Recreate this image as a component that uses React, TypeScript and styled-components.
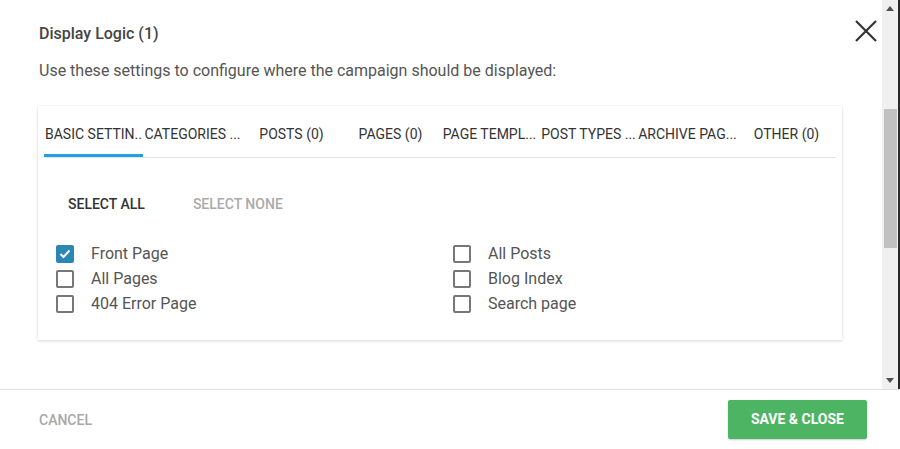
import React from "react";
import styled, { createGlobalStyle } from "styled-components";

const Global = createGlobalStyle`
  html, body { margin: 0; padding: 0; background: #fff; }
  body { font-family: Roboto, "Noto Sans", Arial, sans-serif; }
  * { box-sizing: border-box; }
`;

const Page = styled.div`
  width: 900px;
  height: 449px;
  display: flex;
  flex-direction: column;
  overflow: hidden;
  background: #fff;
`;

const Body = styled.div`
  height: 389px;
  display: flex;
`;

const Main = styled.div`
  flex: 1;
  position: relative;
  padding: 24px 0 0 39px;
  display: flex;
  flex-direction: column;
`;

const Title = styled.div`
  font-size: 16px;
  line-height: 20px;
  font-weight: 500;
  color: #444;
`;

const Subtitle = styled.div`
  margin-top: 17px;
  font-size: 16px;
  line-height: 20px;
  color: #555;
`;

const CloseButton = styled.button`
  position: absolute;
  top: 19px;
  right: 4px;
  width: 24px;
  height: 24px;
  padding: 0;
  border: none;
  background: none;
  display: flex;
  align-items: center;
  justify-content: center;
`;

const Card = styled.div`
  margin: 25px 0 0 -1px;
  width: 804px;
  background: #fff;
  box-shadow: 0 1px 3px rgba(0, 0, 0, 0.16), 0 0 1px rgba(0, 0, 0, 0.06);
  padding-bottom: 24px;
`;

const TabList = styled.div`
  margin: 0 6px;
  display: grid;
  grid-template-columns: repeat(8, 99px);
  border-bottom: 1px solid #e4e4e4;
`;

const Tab = styled.div<{ $active?: boolean }>`
  position: relative;
  height: 51px;
  padding: 18px 0 0;
  font-size: 14px;
  line-height: 20px;
  color: #333;
  text-align: center;
  white-space: nowrap;
  overflow: hidden;
  &::after {
    content: "";
    position: absolute;
    left: 0;
    right: 0;
    bottom: 0;
    height: 3px;
    background: ${(p) => (p.$active ? "#1da1e2" : "transparent")};
  }
`;

const ButtonRow = styled.div`
  margin-top: 28px;
  padding-left: 18px;
  display: flex;
  gap: 24px;
`;

const FlatButton = styled.button<{ $muted?: boolean }>`
  height: 36px;
  padding: 0 12px;
  border: none;
  background: none;
  font-family: Roboto, Arial, sans-serif;
  font-size: 14px;
  font-weight: 500;
  color: ${(p) => (p.$muted ? "#aaa" : "#333")};
`;

const Grid = styled.div`
  margin-top: 19px;
  padding-left: 18px;
  display: grid;
  grid-template-columns: 397px 1fr;
  grid-auto-flow: column;
  grid-template-rows: repeat(3, 25px);
`;

const Row = styled.label`
  display: flex;
  align-items: center;
  gap: 17px;
  font-size: 16px;
  color: #555;
`;

const Box = styled.span<{ $checked?: boolean }>`
  width: 18px;
  height: 18px;
  border-radius: 2px;
  border: 2px solid ${(p) => (p.$checked ? "#2c86b4" : "#777")};
  background: ${(p) => (p.$checked ? "#2c86b4" : "#fff")};
  display: flex;
  align-items: center;
  justify-content: center;
  margin-top: 1px;
`;

const Scrollbar = styled.div`
  width: 18px;
  background: #f0f0f0;
  border-right: 2px solid #2a2a2a;
  display: flex;
  flex-direction: column;
`;

const Arrow = styled.div`
  height: 17px;
  display: flex;
  align-items: center;
  justify-content: center;
`;

const Track = styled.div`
  flex: 1;
  padding-top: 92px;
`;

const Thumb = styled.div`
  margin-left: 2px;
  width: 13px;
  height: 139px;
  background: #c1c1c1;
`;

const Footer = styled.div`
  flex: 1;
  border-top: 1px solid #e0e0e0;
  display: flex;
  align-items: center;
  justify-content: space-between;
  padding: 0 33px 0 39px;
`;

const Cancel = styled.button`
  padding: 0;
  border: none;
  background: none;
  font-family: Roboto, Arial, sans-serif;
  font-size: 14px;
  font-weight: 500;
  color: #a8a8a8;
`;

const Save = styled.button`
  height: 39px;
  padding: 0 23px;
  border: none;
  border-radius: 2px;
  background: #4cb462;
  color: #fff;
  font-family: Roboto, Arial, sans-serif;
  font-size: 14px;
  font-weight: 700;
  box-shadow: 0 1px 2px rgba(0, 0, 0, 0.2);
  margin-top: -1px;
`;

const tabs = [
  "BASIC SETTIN..",
  "CATEGORIES ...",
  "POSTS (0)",
  "PAGES (0)",
  "PAGE TEMPL...",
  "POST TYPES ...",
  "ARCHIVE PAG...",
  "OTHER (0)",
];

const items = [
  { label: "Front Page", checked: true },
  { label: "All Pages" },
  { label: "404 Error Page" },
  { label: "All Posts" },
  { label: "Blog Index" },
  { label: "Search page" },
];

export default function App() {
  return (
    <Page>
      <Global />
      <Body>
        <Main>
          <Title>Display Logic (1)</Title>
          <Subtitle>Use these settings to configure where the campaign should be displayed:</Subtitle>
          <CloseButton aria-label="close">
            <svg width="22" height="22" viewBox="0 0 22 22">
              <path d="M1 1 L21 21 M21 1 L1 21" stroke="#333" strokeWidth="2.2" fill="none" />
            </svg>
          </CloseButton>
          <Card>
            <TabList>
              {tabs.map((t, i) => (
                <Tab key={t} $active={i === 0}>
                  {t}
                </Tab>
              ))}
            </TabList>
            <ButtonRow>
              <FlatButton>SELECT ALL</FlatButton>
              <FlatButton $muted>SELECT NONE</FlatButton>
            </ButtonRow>
            <Grid>
              {items.map((it) => (
                <Row key={it.label}>
                  <Box $checked={it.checked}>
                    {it.checked && (
                      <svg width="12" height="10" viewBox="0 0 12 10">
                        <path d="M1.5 5 L4.5 8 L10.5 1.5" stroke="#fff" strokeWidth="2" fill="none" />
                      </svg>
                    )}
                  </Box>
                  {it.label}
                </Row>
              ))}
            </Grid>
          </Card>
        </Main>
        <Scrollbar>
          <Arrow>
            <svg width="8" height="5" viewBox="0 0 8 5">
              <path d="M0 5 L4 0 L8 5 Z" fill="#505050" />
            </svg>
          </Arrow>
          <Track>
            <Thumb />
          </Track>
          <Arrow>
            <svg width="8" height="5" viewBox="0 0 8 5">
              <path d="M0 0 L8 0 L4 5 Z" fill="#505050" />
            </svg>
          </Arrow>
        </Scrollbar>
      </Body>
      <Footer>
        <Cancel>CANCEL</Cancel>
        <Save>SAVE &amp; CLOSE</Save>
      </Footer>
    </Page>
  );
}
